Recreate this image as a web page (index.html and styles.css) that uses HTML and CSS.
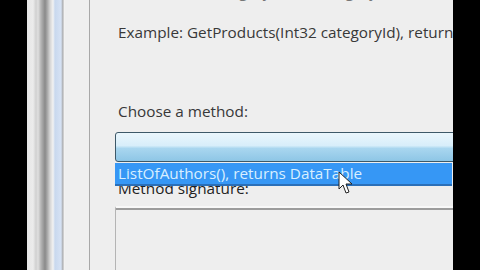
FILE: index.html
```html
<!DOCTYPE html>
<html lang="en">
<head>
    <meta charset="UTF-8">
    <title>Choose a method</title>
    <link rel="stylesheet" href="styles.css">
</head>
<body>

<div class="screen">
    <div class="edge"></div>
    <div class="frame"></div>
    <div class="sidebar"></div>
    <div class="panel">
        <p class="cut">Method: GetCategory(Int32 categoryId), returns Category</p>
        <p class="hint">Example: GetProducts(Int32 categoryId), returns DataTable</p>
        <p class="label">Choose a method:</p>
        <div class="combo"></div>
        <div class="dropdown">
            <div class="item">ListOfAuthors(), returns DataTable</div>
        </div>
        <p class="label sig">Method signature:</p>
        <div class="sigbox"></div>
        <svg class="cursor" width="16" height="26" viewBox="0 0 16 26">
            <path d="M1 1 L1 18 L5 14 L8 22 L11 21 L8 13 L14 13 Z" fill="#fff" stroke="#222" stroke-width="1"/>
        </svg>
    </div>
    <div class="edge"></div>
</div>

</body>
</html>
```

FILE: styles.css
```css
html, body {
    margin: 0;
    padding: 0;
    background-color: #000;
}
.screen {
    display: flex;
    width: 480px;
    height: 270px;
    overflow: hidden;
    font-family: "Open Sans", "Noto Sans", sans-serif;
}
.edge {
    width: 27px;
    flex-shrink: 0;
    background-color: #000;
}
.frame {
    width: 38px;
    flex-shrink: 0;
    background: linear-gradient(to right,
        #e6e6e6 0px, #ececec 6px, #d0d0d0 9px, #e0e0e0 11px,
        #b4b4b4 14px, #8a8a8a 18px, #a4a4a4 20px, #d4d4d4 23px,
        #f2f2f2 26px, #c8d8ee 28px, #d6e2f4 34px, #a8a8a8 36px, #f2f2f2 37px);
}
.sidebar {
    width: 24px;
    flex-shrink: 0;
    background-color: #efefef;
    border-right: 1px solid #a8a8a8;
}
.panel {
    position: relative;
    flex: 1;
    background-color: #eeeeee;
    padding-left: 25px;
    overflow: hidden;
    color: #383838;
    font-size: 15.3px;
}
.panel p {
    margin: 0;
    padding-left: 3px;
    white-space: nowrap;
    line-height: 21px;
}
.cut {
    margin-top: -19px !important;
    height: 21px;
    color: #777;
}
.hint {
    margin-top: 20px !important;
    height: 79px;
}
.label {
    height: 31px;
}
.combo {
    width: 360px;
    height: 28px;
    border: 1px solid #3d5868;
    border-radius: 3px;
    background: linear-gradient(to bottom, #eaf6fc 0%, #d8eefa 45%, #a9d6ef 55%, #8ec6e6 100%);
}
.dropdown {
    position: relative;
    z-index: 2;
    width: 337px;
    margin-top: 1px;
    background-color: #3697f5;
    border-bottom: 2px solid #2a6fb8;
}
.item {
    height: 21px;
    line-height: 21px;
    padding-left: 3px;
    color: #d8efff;
    white-space: nowrap;
    overflow: hidden;
}
.sig {
    margin-top: -8px !important;
    height: 21px;
    color: #222;
}
.sigbox {
    width: 360px;
    height: 80px;
    margin-top: 7px;
    border-top: 2px solid #f8f8f8;
    box-shadow: inset 0 2px 0 #9c9c9c;
    border-left: 1px solid #b4b4b4;
    background-color: #eeeeee;
}
.cursor {
    position: absolute;
    left: 248px;
    top: 171px;
    z-index: 3;
}
```
